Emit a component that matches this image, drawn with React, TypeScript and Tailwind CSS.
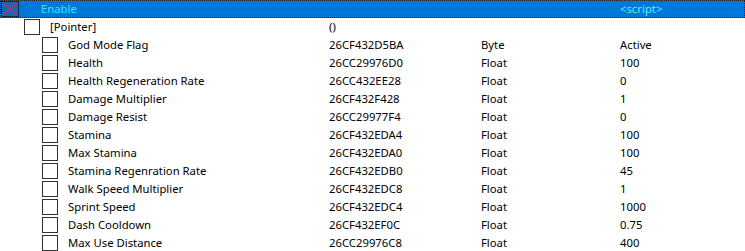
import React from "react";

const rows: [string, string, string, string][] = [
  ["God Mode Flag", "26CF432D5BA", "Byte", "Active"],
  ["Health", "26CC29976D0", "Float", "100"],
  ["Health Regeneration Rate", "26CC432EE28", "Float", "0"],
  ["Damage Multiplier", "26CF432F428", "Float", "1"],
  ["Damage Resist", "26CC29977F4", "Float", "0"],
  ["Stamina", "26CF432EDA4", "Float", "100"],
  ["Max Stamina", "26CF432EDA0", "Float", "100"],
  ["Stamina Regenration Rate", "26CF432EDB0", "Float", "45"],
  ["Walk Speed Multiplier", "26CF432EDC8", "Float", "1"],
  ["Sprint Speed", "26CF432EDC4", "Float", "1000"],
  ["Dash Cooldown", "26CF432EF0C", "Float", "0.75"],
  ["Max Use Distance", "26CC29976C8", "Float", "400"],
];

function Box() {
  return <div className="w-[16px] h-[16px] border border-[#333] bg-white shrink-0" />;
}

export default function App() {
  return (
    <div
      className="w-[745px] h-[251px] bg-white overflow-hidden text-[11.3px] text-black"
      style={{ fontFamily: '"Noto Sans", "Open Sans", sans-serif' }}
    >
      <div className="h-[18px] bg-[#0078d7] flex items-center border border-dotted border-[#222]">
        <div className="w-[328px] flex items-center shrink-0">
          <div className="w-[18px] h-[16px] border border-[#1a2a3a] bg-[#1e64b4] shrink-0">
            <svg width="16" height="14" viewBox="0 0 16 14" className="block">
              <path d="M1 1 L15 13 M15 1 L1 13" stroke="#b8305a" strokeWidth="1.2" />
            </svg>
          </div>
          <span className="ml-[22px] text-[#2ee8f8] leading-none">Enable</span>
        </div>
        <div className="w-[152px] shrink-0" />
        <div className="w-[139px] shrink-0" />
        <div className="text-[#5ef0ff] leading-none">&lt;script&gt;</div>
      </div>
      <div className="h-[18px] flex items-center">
        <div className="w-[329px] flex items-center shrink-0 pl-[24px]">
          <Box />
          <span className="ml-[10px] leading-none">[Pointer]</span>
        </div>
        <div className="w-[152px] shrink-0 leading-none">()</div>
      </div>
      {rows.map(([d, a, t, v]) => (
        <div key={d} className="h-[18px] flex items-center">
          <div className="w-[329px] flex items-center shrink-0 pl-[42px]">
            <Box />
            <span className="ml-[10px] leading-none">{d}</span>
          </div>
          <div className="w-[152px] shrink-0 leading-none">{a}</div>
          <div className="w-[139px] shrink-0 leading-none">{t}</div>
          <div className="leading-none">{v}</div>
        </div>
      ))}
    </div>
  );
}
